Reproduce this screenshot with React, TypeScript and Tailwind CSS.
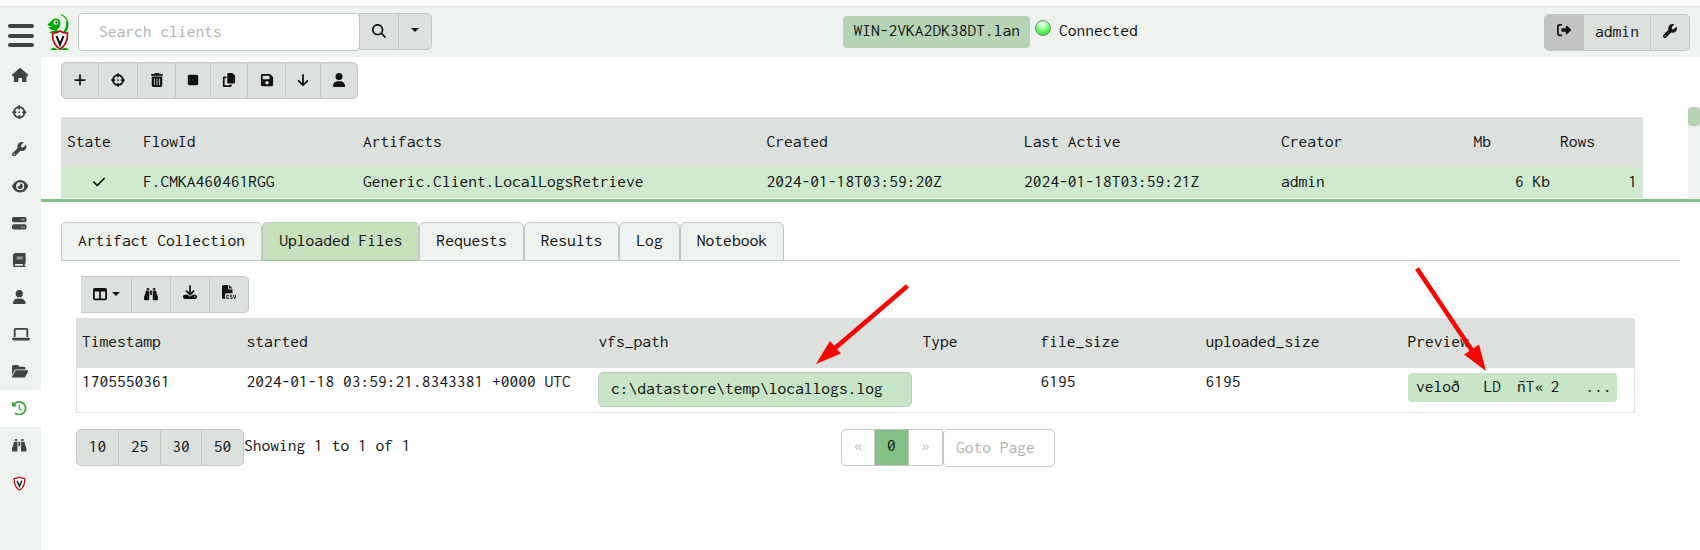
import type { ReactNode } from "react";
import {
  FaArrowDown,
  FaBinoculars,
  FaBook,
  FaCheck,
  FaClockRotateLeft,
  FaCopy,
  FaCrosshairs,
  FaDownload,
  FaEye,
  FaFileCsv,
  FaFloppyDisk,
  FaFolderOpen,
  FaHouse,
  FaLaptop,
  FaMagnifyingGlass,
  FaPlus,
  FaRightFromBracket,
  FaServer,
  FaStop,
  FaTableColumns,
  FaTrashCan,
  FaUser,
  FaWrench,
} from "react-icons/fa6";

const ICON = "h-[14px] w-auto shrink-0";
const NAV_ICON = "h-[14.500px] w-auto shrink-0";
const NAV_ICON_WIDE = "h-[14.500px] w-[16.300px] shrink-0";

function Caret() {
  return (
    <svg viewBox="0 0 16 8" className="h-1 w-2">
      <path d="M0 0H16L8 8Z" fill="currentColor" />
    </svg>
  );
}

function Shield({ className }: { className: string }) {
  return (
    <svg viewBox="0 0 16 18" className={className}>
      <path
        d="M8 1C6 2.5 3.500 3 1.500 3C1.300 9 2.500 14 8 17C13.500 14 14.700 9 14.500 3C12.500 3 10 2.500 8 1Z"
        fill="#fff"
        stroke="#b01015"
        strokeWidth="1.600"
      />
      <path d="M5 5.500L8 12.500L11 5.500" fill="none" stroke="#111" strokeWidth="1.700" />
    </svg>
  );
}

function Logo() {
  return (
    <svg viewBox="0 0 24 38" className="h-[38px] w-6">
      <path d="M14 1.500C20 4 21.500 9 20.500 14C20 17 18.500 19 17 20" fill="none" stroke="#0a0" strokeWidth="1.300" />
      <path d="M20 8C20.500 13 19.500 17 17 19" fill="none" stroke="#0a0" strokeWidth="2" />
      <path
        d="M0.500 11.500C2 9.500 4 9 5.500 7C7.500 4.500 12.500 5 13.300 9C13.800 12.500 12.500 15.500 10 17C11 18 12 19 12.500 21L9 21C8 19.500 6 19 3 20L2.500 18.700C5 18.300 6.500 18 7.500 17C4.500 17.300 2 16 1.500 14L6 13.500C3.500 13.300 1 13 0.500 11.500Z"
        fill="#0a0"
      />
      <circle cx="8.800" cy="9.500" r="2.200" fill="#fff" />
      <circle cx="9.300" cy="9.500" r="1" fill="#111" />
      <path d="M3 37C5 34.500 8 34.500 10 36.500L14 36.500C17 34.500 20 34.500 22 37Z" fill="#0a0" />
      <path
        d="M13 18C11 19.500 8 20.200 5.500 20.200C5.200 27 6.500 32 13 36C19.500 32 20.800 27 20.500 20.200C18 20.200 15 19.500 13 18Z"
        fill="#fff"
        stroke="#b01015"
        strokeWidth="1.700"
      />
      <path d="M9.500 23L13 31.500L16.500 23" fill="none" stroke="#111" strokeWidth="2" />
    </svg>
  );
}

const navItems: { icon: ReactNode; active?: boolean }[] = [
  { icon: <FaHouse className={NAV_ICON_WIDE} /> },
  { icon: <FaCrosshairs className={NAV_ICON} /> },
  { icon: <FaWrench className={NAV_ICON} /> },
  { icon: <FaEye className={NAV_ICON_WIDE} /> },
  { icon: <FaServer className={NAV_ICON} /> },
  { icon: <FaBook className={NAV_ICON} /> },
  { icon: <FaUser className={NAV_ICON} /> },
  { icon: <FaLaptop className="h-[14.500px] w-[18px] shrink-0" /> },
  { icon: <FaFolderOpen className={NAV_ICON_WIDE} /> },
  { icon: <FaClockRotateLeft className={NAV_ICON} />, active: true },
  { icon: <FaBinoculars className={NAV_ICON} /> },
  { icon: <Shield className="mt-0.5 ml-px h-[15px] w-[13px]" /> },
];

function Btn({ className = "", children }: { className?: string; children: ReactNode }) {
  return (
    <button
      className={`flex h-full items-center justify-center border-r border-[#c3c7c4] pb-px last:border-r-0 ${className}`}
    >
      {children}
    </button>
  );
}

const GROUP = "flex h-[37px] overflow-hidden rounded-[5px] border border-[#c3c7c4] bg-[#dde1de]";

function Header() {
  return (
    <header className="flex h-[51px] shrink-0 border-t border-[#e2e5e2] bg-[#eef3ef]">
      <div className="mt-[17px] ml-2 flex h-[23px] w-[26px] flex-col justify-between">
        <span className="h-1 rounded-full bg-[#414341]" />
        <span className="h-1 rounded-full bg-[#414341]" />
        <span className="h-1 rounded-full bg-[#414341]" />
      </div>
      <div className="mt-1.5 ml-[13px]">
        <Logo />
      </div>
      <div className="mt-1.5 ml-[7px] flex">
        <input
          placeholder="Search clients"
          className="h-[38px] w-[282px] rounded-[5px] border border-[#c3c7c4] bg-white px-5 pb-0.5 placeholder:text-[#b0b3b0]"
        />
        <div className="-ml-px flex h-[37px] overflow-hidden rounded-r-[5px] border border-[#c3c7c4] bg-[#dde1de]">
          <Btn className="w-[39px]">
            <FaMagnifyingGlass className={ICON} />
          </Btn>
          <Btn className="w-8 !pb-1">
            <Caret />
          </Btn>
        </div>
      </div>
      <div className="mt-[9px] ml-[411px] flex h-8">
        <div className="w-[187px] rounded bg-[#b5d5b5] pl-[10.500px] leading-[29px]">WIN-2VKA2DK38DT.lan</div>
        <span className="mt-1 ml-[5px] size-4 rounded-full border border-[#6c8a6c] bg-[radial-gradient(circle_at_45%_20%,#ffffff_0%,#9dff9d_35%,#33f033_75%,#22dd22_100%)]" />
        <span className="ml-2 leading-[29px]">Connected</span>
      </div>
      <div className="mt-[7px] mr-[10px] ml-auto">
        <div className={GROUP}>
          <Btn className="w-[39px] bg-[#c4c4c4]">
            <FaRightFromBracket className="mb-1 h-[14px] w-auto" />
          </Btn>
          <Btn className="w-[67px] !pb-[3px]">admin</Btn>
          <Btn className="w-[38px]">
            <FaWrench className="mb-0.5 h-[14px] w-auto" />
          </Btn>
        </div>
      </div>
    </header>
  );
}

const FLOW_COLS =
  "grid grid-cols-[76px_220px_403.500px_257.500px_257px_192.500px_86.500px_1fr] items-center pl-1.5";

function FlowPane() {
  return (
    <section className="flex h-[145px] shrink-0 flex-col border-b-[3px] border-[#84c184]">
      <div className="mt-[5px] ml-5 flex">
        <div className={GROUP}>
          <Btn className="w-[37px]"><FaPlus className={ICON} /></Btn>
          <Btn className="w-[39px]"><FaCrosshairs className={ICON} /></Btn>
          <Btn className="w-[38px]"><FaTrashCan className={ICON} /></Btn>
          <Btn className="w-[35px]"><FaStop className={ICON} /></Btn>
          <Btn className="w-[37px]"><FaCopy className={ICON} /></Btn>
          <Btn className="w-[38px]"><FaFloppyDisk className={ICON} /></Btn>
          <Btn className="w-[35px]"><FaArrowDown className={ICON} /></Btn>
          <Btn className="w-[36px]"><FaUser className={ICON} /></Btn>
        </div>
      </div>
      <div className="flex flex-1 justify-between pl-5">
        <div className="mt-[18px] w-[1582px] border-r border-[#dde5e3]">
          <div className={`${FLOW_COLS} h-[50px] bg-[#dde1de] pb-0.5`}>
            <span>State</span>
            <span>FlowId</span>
            <span>Artifacts</span>
            <span>Created</span>
            <span>Last Active</span>
            <span>Creator</span>
            <span>Mb</span>
            <span>Rows</span>
          </div>
          <div className={`${FLOW_COLS} h-[31px] bg-[#ceebce] pb-[3px]`}>
            <span className="pl-[25px]"><FaCheck className="mt-0.5 h-[14px] w-auto" /></span>
            <span>F.CMKA460461RGG</span>
            <span>Generic.Client.LocalLogsRetrieve</span>
            <span>2024-01-18T03:59:20Z</span>
            <span>2024-01-18T03:59:21Z</span>
            <span>admin</span>
            <span className="pr-[10px] text-right">6 Kb</span>
            <span className="pr-[5px] text-right">1</span>
          </div>
        </div>
        <div className="mt-2 w-3 bg-[#eef3ef]">
          <div className="h-[19px] rounded bg-[#b5d5b5]" />
        </div>
      </div>
    </section>
  );
}

const tabs = ["Artifact Collection", "Uploaded Files", "Requests", "Results", "Log", "Notebook"];

function Tabs() {
  return (
    <div className="mt-5 mr-5 ml-5 flex h-[39px] border-b border-[#c3c7c4] text-[17.600px]">
      {tabs.map((tab) => (
        <button
          key={tab}
          className={`h-[39px] rounded-t-[5px] border border-[#c3c7c4] px-4 pb-[3px] whitespace-nowrap ${
            tab === "Uploaded Files" ? "border-b-[#8fbb8c] bg-[#c6e1bc]" : "bg-[#eef3ef]"
          }`}
        >
          {tab}
        </button>
      ))}
    </div>
  );
}

const FILE_COLS =
  "grid grid-cols-[164.500px_352px_324px_118px_165px_202px_1fr]";

function UploadsTable() {
  return (
    <div className="mt-[5px] ml-[35px] w-[1559px]">
      <div className={`${FILE_COLS} h-[50px] items-center bg-[#dde1de] pb-1 pl-1.5`}>
        <span>Timestamp</span>
        <span>started</span>
        <span>vfs_path</span>
        <span>Type</span>
        <span>file_size</span>
        <span>uploaded_size</span>
        <span>Preview</span>
      </div>
      <div className={`${FILE_COLS} h-[45px] border border-t-0 border-[#dde5e3] pt-px pl-[5px] leading-6`}>
        <span>1705550361</span>
        <span className="whitespace-nowrap">2024-01-18 03:59:21.8343381 +0000 UTC</span>
        <span className="mt-[3px] -ml-[0.500px] h-[35px] w-[314px] rounded-[5px] border border-[#bccbbb] bg-[#c6e6c5] pl-3 leading-[31px]">
          c:\datastore\temp\locallogs.log
        </span>
        <span />
        <span>6195</span>
        <span>6195</span>
        <span className="mt-1 ml-[0.500px] flex h-[29px] w-[209px] rounded-[4px] bg-[#c6e6c5] pl-2 leading-[26px]">
          <span className="w-[67.500px]">veloð</span>
          <span className="w-[33.500px]">LD</span>
          <span className="w-[33.500px]">ñT«</span>
          <span className="w-[35px]">2</span>
          <span>...</span>
        </span>
      </div>
    </div>
  );
}

function UploadsToolbar() {
  return (
    <div className="mt-[15px] ml-10 flex">
      <div className="flex h-[37px] overflow-hidden rounded-r-[5px] border border-l-0 border-[#c3c7c4] bg-[#dde1de]">
        <Btn className="w-[51px] gap-[5px]">
          <FaTableColumns className={ICON} />
          <Caret />
        </Btn>
        <Btn className="w-[39px]"><FaBinoculars className={ICON} /></Btn>
        <Btn className="w-[39px]"><FaDownload className="mb-1 h-[14px] w-auto" /></Btn>
        <Btn className="w-[38px]"><FaFileCsv className="mb-1 h-[14px] w-auto" /></Btn>
      </div>
    </div>
  );
}

function Pager() {
  return (
    <div className="mt-4 ml-[35px] flex">
      <div className="flex w-[765px]">
        <div className={GROUP}>
          <Btn className="w-[42px] !pb-[3px]">10</Btn>
          <Btn className="w-[42px] !pb-[3px]">25</Btn>
          <Btn className="w-[41px] !pb-[3px]">30</Btn>
          <Btn className="w-[41px] !pb-[3px]">50</Btn>
        </div>
        <span className="leading-[32px]">Showing 1 to 1 of 1</span>
      </div>
      <div className="flex h-[37px] w-[102px] overflow-hidden rounded-l-[5px] border border-[#c3c7c4] leading-[31px]">
        <span className="w-[33px] border-r border-[#c3c7c4] text-center text-[#b9bcb9]">«</span>
        <span className="w-[34px] border-r border-[#c3c7c4] bg-[#84c184] text-center">0</span>
        <span className="flex-1 text-center text-[#b9bcb9]">»</span>
      </div>
      <input
        placeholder="Goto Page"
        className="h-[38px] w-[112px] rounded-[5px] border border-[#c3c7c4] px-3 pb-0.5 placeholder:text-[#b0b3b0]"
      />
    </div>
  );
}

function Arrows() {
  return (
    <svg viewBox="0 0 1700 550" className="pointer-events-none absolute inset-0 h-[550px] w-[1700px]">
      <g stroke="#f00" strokeWidth="4.500">
        <line x1="907.500" y1="286" x2="834" y2="349" />
        <line x1="1417" y1="268.500" x2="1473" y2="352" />
      </g>
      <polygon points="816,364 830,341 841,353.500" fill="#f00" />
      <polygon points="1486,371 1464,354.500 1479,344.500" fill="#f00" />
    </svg>
  );
}

export default function App() {
  return (
    <div className="relative flex h-[550px] w-[1700px] flex-col overflow-hidden bg-white pt-1.5 font-['Inconsolata','Noto_Sans_Mono_CJK_SC',monospace] text-[17.550px] leading-6 text-[#111]">
      <Header />
      <div className="flex min-h-0 flex-1">
        <nav className="w-[41px] shrink-0 bg-[#eef3ef] text-[#414341]">
          {navItems.map((item, i) => (
            <div
              key={i}
              className={`flex h-[37px] items-center pb-px pl-3 ${item.active ? "bg-white text-[#3fa63f]" : ""}`}
            >
              {item.icon}
            </div>
          ))}
        </nav>
        <main className="flex min-w-0 flex-1 flex-col">
          <FlowPane />
          <Tabs />
          <UploadsToolbar />
          <UploadsTable />
          <Pager />
        </main>
      </div>
      <Arrows />
    </div>
  );
}
